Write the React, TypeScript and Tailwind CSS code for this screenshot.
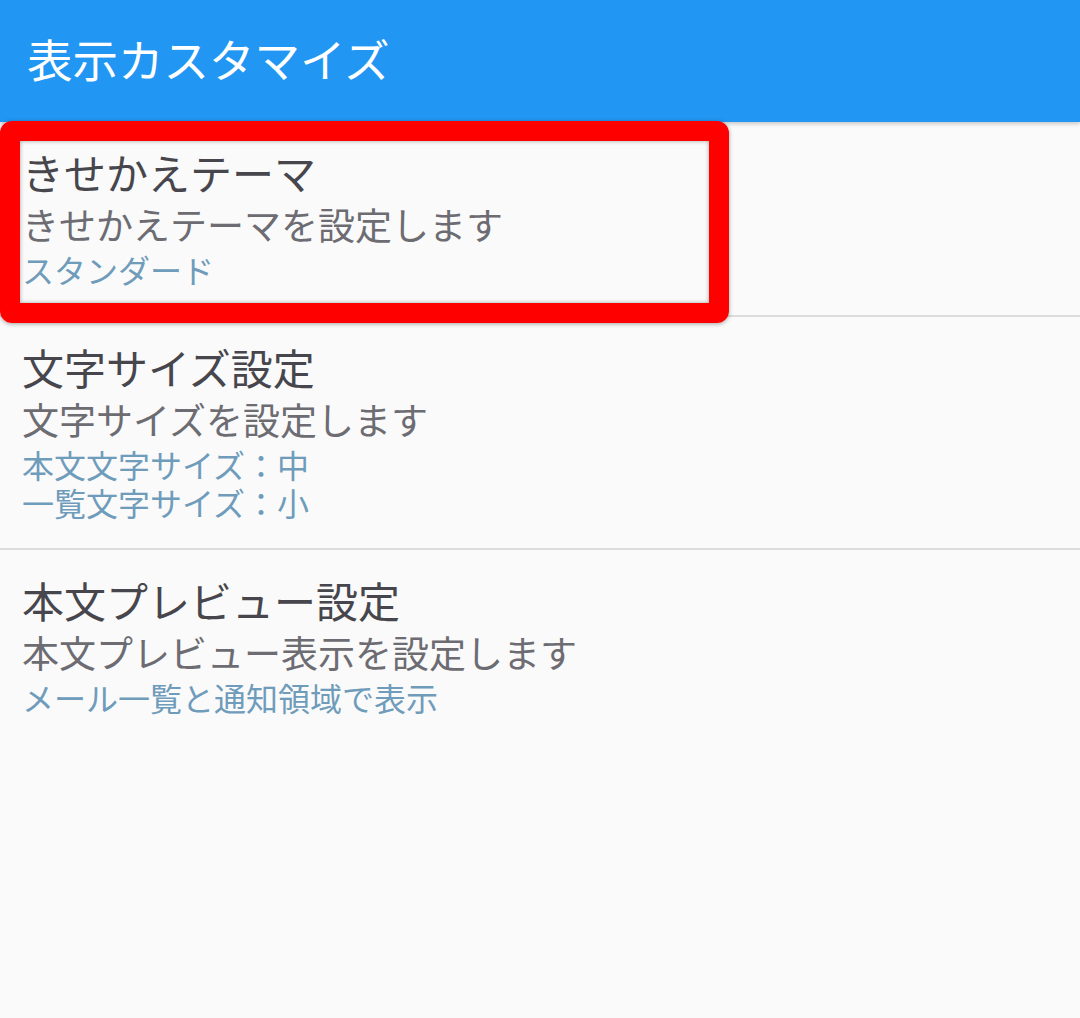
const items = [
  {
    title: "きせかえテーマ",
    desc: "きせかえテーマを設定します",
    values: ["スタンダード"],
  },
  {
    title: "文字サイズ設定",
    desc: "文字サイズを設定します",
    values: ["本文文字サイズ：中", "一覧文字サイズ：小"],
  },
  {
    title: "本文プレビュー設定",
    desc: "本文プレビュー表示を設定します",
    values: ["メール一覧と通知領域で表示"],
  },
];

export default function App() {
  return (
    <div
      className="relative w-[1080px] h-[1018px] bg-[#fafafa] overflow-hidden"
      style={{ fontFamily: '"Noto Sans CJK JP", "Noto Sans", sans-serif' }}
    >
      {/* App bar */}
      <div className="relative z-10 h-[122px] bg-[#2196f3] flex items-center pl-[27px] shadow-[0_2px_4px_rgba(0,0,0,0.2)]">
        <h1 className="text-[45.5px] leading-none text-white pb-[4px]">表示カスタマイズ</h1>
      </div>

      {/* Settings list */}
      <div className="flex flex-col">
        {items.map((item, i) => (
          <div
            key={item.title}
            className={
              "px-[22px] pt-[24px] pb-[27px] " +
              (i < items.length - 1 ? "border-b-2 border-[#dcdcdc]" : "")
            }
          >
            <div className="text-[42px] leading-[52px] text-[#46464c]">{item.title}</div>
            <div className="text-[37px] leading-[52px] text-[#6c6c72]">{item.desc}</div>
            {item.values.map((v) => (
              <div key={v} className="text-[32px] leading-[38px] text-[#6f9cba]">
                {v}
              </div>
            ))}
          </div>
        ))}
      </div>

      {/* Red highlight annotation */}
      <div className="absolute left-0 top-[121px] w-[729px] h-[202px] border-[20px] border-[#ff0000] rounded-[12px] z-20 shadow-[0_1px_4px_rgba(0,0,0,0.35),inset_0_0_4px_rgba(0,0,0,0.35)]" />
    </div>
  );
}
